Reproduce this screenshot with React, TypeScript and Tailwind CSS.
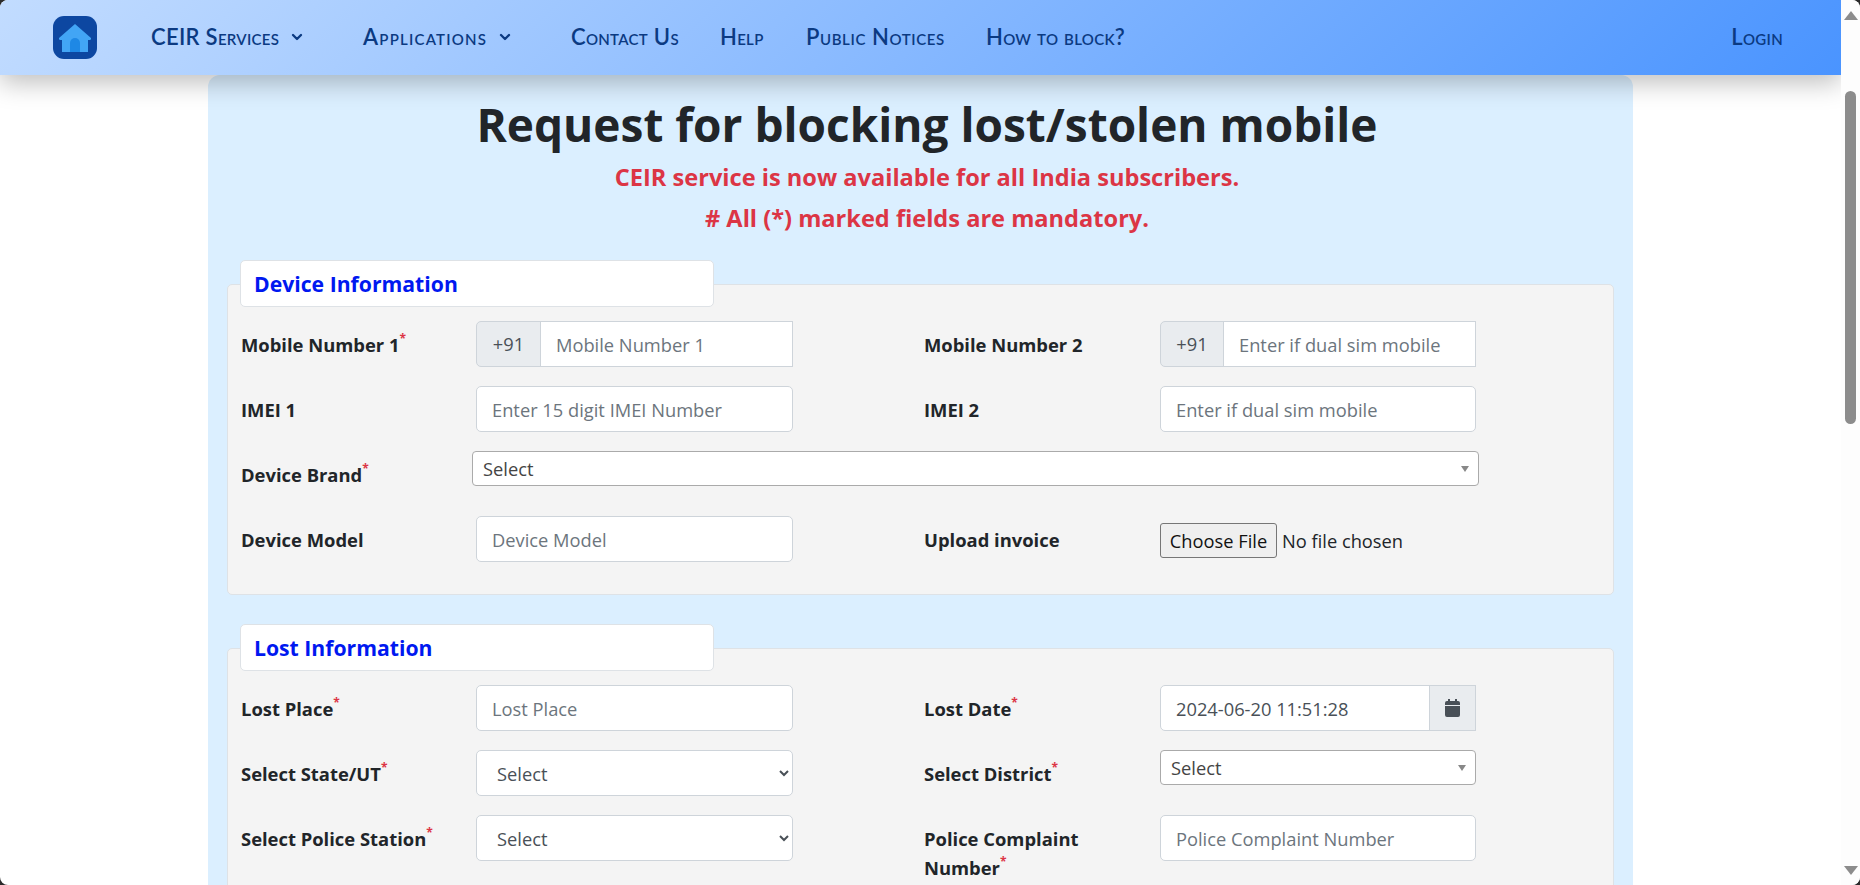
import React from 'react';
import { ChevronDown } from 'lucide-react';

const NAV_FONT = { fontFamily: 'Lato, sans-serif', fontVariant: 'small-caps' };

function HomeLogo() {
  return (
    <svg width="44" height="43" viewBox="0 0 44 43">
      <rect width="44" height="43" rx="11" fill="#0d47a1" />
      <path d="M22 8 L38 22 Q38.5 24 36 24 L35 24 L35 36 L9 36 L9 24 L8 24 Q5.5 24 6 22 Z" fill="#42a5f5" />
      <path d="M17 36 V27 a5 5 0 0 1 10 0 V36 Z" fill="#1e88e5" />
    </svg>
  );
}

function NavLink({ children, caret, className }: { children: React.ReactNode; caret?: boolean; className: string }) {
  return (
    <a className={`flex items-center text-[22px] font-semibold text-[#0b3a82] whitespace-nowrap ${className}`} style={NAV_FONT}>
      {children}
      {caret && <ChevronDown size={16} strokeWidth={3.5} className="ml-[10px] mt-[2px]" />}
    </a>
  );
}

function Label({ children, required }: { children: React.ReactNode; required?: boolean }) {
  return (
    <label className="w-[215px] pt-[9px] text-[18.4px] leading-[29px] font-bold text-[#212529]">
      {children}
      {required && <sup className="text-[#dc3545] text-[12px] -top-[9px]">*</sup>}
    </label>
  );
}

const inputClass = 'w-full h-[46px] bg-white border border-[#ced4da] px-[15px] text-[18.3px] text-[#495057] placeholder:text-[#6c757d] outline-none';

function TextInput({ placeholder }: { placeholder: string }) {
  return <input className={`${inputClass} rounded-[5px]`} placeholder={placeholder} />;
}

function PhoneInput({ placeholder, addon }: { placeholder: string; addon: string }) {
  return (
    <div className="flex w-full h-[46px]">
      <span className={`${addon} shrink-0 flex items-center justify-center bg-[#e9ecef] border border-[#ced4da] rounded-l-[5px] text-[18.3px] text-[#495057]`}>+91</span>
      <input className={`${inputClass} -ml-px`} placeholder={placeholder} />
    </div>
  );
}

function NativeSelect() {
  return (
    <select className="w-full h-[46px] bg-white border border-[#ced4da] rounded-[5px] pl-[16px] pr-[4px] text-[18.3px] text-[#495057] outline-none">
      <option>Select</option>
    </select>
  );
}

function Select2({ className }: { className: string }) {
  return (
    <div className={`relative h-[35px] bg-white border border-[#aaaaaa] rounded-[4px] pl-[10px] flex items-center text-[18.3px] text-[#444444] ${className}`}>
      Select
      <span className="absolute right-[9px] top-[14px] border-x-[4px] border-x-transparent border-t-[6px] border-t-[#888888]" />
    </div>
  );
}

function Cell({ children, right }: { children: React.ReactNode; right?: boolean }) {
  return <div className={`${right ? 'w-[316px]' : 'w-[317px]'} shrink-0`}>{children}</div>;
}

function Row({ children }: { children: React.ReactNode }) {
  return <div className="flex items-start h-[65px]">{children}</div>;
}

function Gutter() {
  return <div className="w-[131px] shrink-0" />;
}

function Section({ title, className, children }: { title: string; className: string; children: React.ReactNode }) {
  return (
    <section className={`mx-[19px] bg-[#f4f4f4] border border-[#dee2e6] rounded-[5px] ${className}`}>
      <h5 className="relative ml-[12px] -mt-[25px] mb-[14px] w-[474px] h-[47px] bg-white border border-[#dee2e6] rounded-[5px] pl-[13px] flex items-center text-[21.2px] font-bold text-[#0018f0]">
        {title}
      </h5>
      <div className="pl-[13px]">{children}</div>
    </section>
  );
}

export default function App() {
  return (
    <div className="h-[885px] w-[1860px] overflow-hidden bg-[#2b2b2b]" style={{ fontFamily: '"Open Sans", sans-serif' }}>
      <div className="flex h-full rounded-[8px] overflow-hidden bg-white">
        <div className="w-[1841px] shrink-0 h-full overflow-hidden">
          <header className="relative z-10 h-[75px] flex items-center pl-[53px] pr-[58px] bg-[linear-gradient(135deg,#c2dcff,#4a94ff)] shadow-[0_8px_24px_rgba(0,0,0,0.25)]">
            <HomeLogo />
            <nav className="flex items-center ml-[54px] flex-1 pb-[3px] tracking-[0.3px]">
              <NavLink caret className="w-[212px]">CEIR Services</NavLink>
              <NavLink caret className="w-[208px] tracking-[1.2px]">Applications</NavLink>
              <NavLink className="w-[149px]">Contact Us</NavLink>
              <NavLink className="w-[86px]">Help</NavLink>
              <NavLink className="w-[180px] tracking-[0.6px]">Public Notices</NavLink>
              <NavLink className="flex-1">How to block?</NavLink>
              <NavLink className="">Login</NavLink>
            </nav>
          </header>

          <main className="mx-auto w-[1425px] h-[900px] bg-[#dbefff] rounded-[12px]">
            <div className="pt-[20px] pl-[13px] mb-[46px] text-center">
              <h1 className="text-[46px] leading-[58px] font-bold text-[#212529]">Request for blocking lost/stolen mobile</h1>
              <p className="mt-[4px] text-[23.6px] leading-[41px] font-bold text-[#dc3545]">CEIR service is now available for all India subscribers.</p>
              <p className="text-[23.6px] leading-[40px] font-bold text-[#dc3545]"># All (*) marked fields are mandatory.</p>
            </div>

            <Section title="Device Information" className="h-[311px]">
              <Row>
                <Label required>Mobile Number 1</Label>
                <div className="w-[20px]" />
                <Cell><PhoneInput addon="w-[65px]" placeholder="Mobile Number 1" /></Cell>
                <Gutter />
                <Label>Mobile Number 2</Label>
                <div className="w-[21px]" />
                <Cell right><PhoneInput addon="w-[64px]" placeholder="Enter if dual sim mobile" /></Cell>
              </Row>
              <Row>
                <Label>IMEI 1</Label>
                <div className="w-[20px]" />
                <Cell><TextInput placeholder="Enter 15 digit IMEI Number" /></Cell>
                <Gutter />
                <Label>IMEI 2</Label>
                <div className="w-[21px]" />
                <Cell right><TextInput placeholder="Enter if dual sim mobile" /></Cell>
              </Row>
              <Row>
                <Label required>Device Brand</Label>
                <Select2 className="ml-[16px] w-[1007px]" />
              </Row>
              <Row>
                <Label>Device Model</Label>
                <div className="w-[20px]" />
                <Cell><TextInput placeholder="Device Model" /></Cell>
                <Gutter />
                <Label>Upload invoice</Label>
                <div className="w-[21px]" />
                <input
                  type="file"
                  className="mt-[7px] w-[316px] text-[18.3px] text-[#212529] file:h-[35px] file:w-[117px] file:mr-[5px] file:bg-[#efefef] file:border file:border-[#767676] file:rounded-[3px] file:text-[#111111]"
                />
              </Row>
            </Section>

            <Section title="Lost Information" className="mt-[53px] h-[300px]">
              <Row>
                <Label required>Lost Place</Label>
                <div className="w-[20px]" />
                <Cell><TextInput placeholder="Lost Place" /></Cell>
                <Gutter />
                <Label required>Lost Date</Label>
                <div className="w-[21px]" />
                <Cell right>
                  <div className="flex h-[46px]">
                    <input className={`${inputClass} rounded-l-[5px]`} defaultValue="2024-06-20 11:51:28" />
                    <span className="w-[47px] shrink-0 -ml-px flex items-center justify-center bg-[#e9ecef] border border-[#ced4da]">
                      <svg width="15" height="18" viewBox="0 0 15 18" fill="#495057">
                        <path d="M3 0h2v2h5V0h2v2h1a2 2 0 0 1 2 2v2H0V4a2 2 0 0 1 2-2h1zM0 7h15v9a2 2 0 0 1-2 2H2a2 2 0 0 1-2-2z" />
                      </svg>
                    </span>
                  </div>
                </Cell>
              </Row>
              <Row>
                <Label required>Select State/UT</Label>
                <div className="w-[20px]" />
                <Cell><NativeSelect /></Cell>
                <Gutter />
                <Label required>Select District</Label>
                <div className="w-[21px]" />
                <Select2 className="w-[316px]" />
              </Row>
              <Row>
                <Label required>Select Police Station</Label>
                <div className="w-[20px]" />
                <Cell><NativeSelect /></Cell>
                <Gutter />
                <Label required>Police Complaint Number</Label>
                <div className="w-[21px]" />
                <Cell right><TextInput placeholder="Police Complaint Number" /></Cell>
              </Row>
            </Section>
          </main>
        </div>

        <aside className="relative w-[19px] shrink-0 bg-[#fdfdfd]">
          <span className="absolute left-[3px] top-[11px] border-x-[7px] border-x-transparent border-b-[9px] border-b-[#8c8c8c]" />
          <div className="absolute left-[4px] top-[91px] w-[11px] h-[333px] rounded-[6px] bg-[#8c8c8c]" />
          <span className="absolute left-[3px] bottom-[10px] border-x-[7px] border-x-transparent border-t-[9px] border-t-[#8c8c8c]" />
        </aside>
      </div>
    </div>
  );
}
